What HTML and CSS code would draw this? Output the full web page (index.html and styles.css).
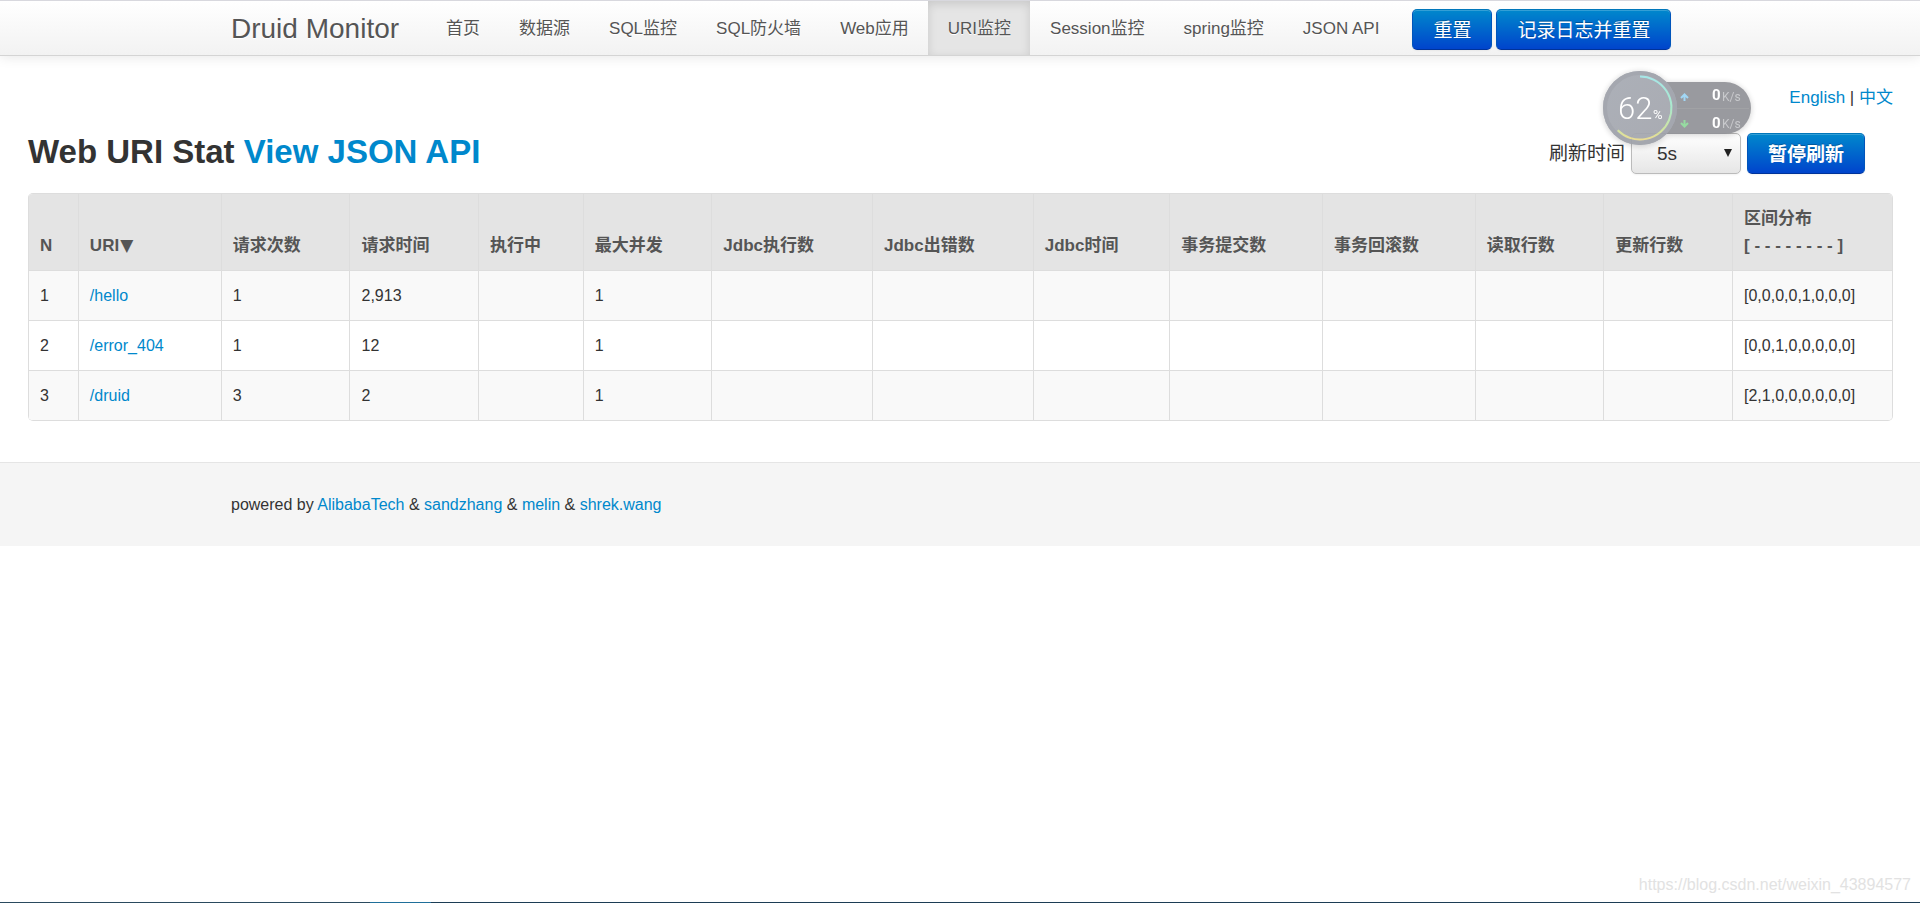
FILE: index.html
```html
<!DOCTYPE html>
<html lang="zh-CN">
    <head>
        <meta charset="utf-8">
        <title>Druid Web URI Stat</title>
        <link rel="stylesheet" href="styles.css">
    </head>
    <body>
        <header class="navbar">
            <div class="container navbar-inner">
                <a class="brand" href="#">Druid Monitor</a>
                <nav class="nav">
                    <a href="#">首页</a>
                    <a href="#">数据源</a>
                    <a href="#">SQL监控</a>
                    <a href="#">SQL防火墙</a>
                    <a href="#">Web应用</a>
                    <a class="active" href="#">URI监控</a>
                    <a href="#">Session监控</a>
                    <a href="#">spring监控</a>
                    <a href="#">JSON API</a>
                </nav>
                <div class="nav-buttons">
                    <button class="btn" type="button">重置</button>
                    <button class="btn" type="button">记录日志并重置</button>
                </div>
            </div>
        </header>

        <main class="content">
            <div class="lang">
                <a href="#">English</a> | <a href="#">中文</a>
            </div>

            <div class="title-row">
                <h3>Web URI Stat <a href="#">View JSON API</a></h3>
                <div class="refresh">
                    <label for="refreshSeconds">刷新时间</label>
                    <span class="select-wrap">
                        <select id="refreshSeconds">
                            <option>5s</option>
                            <option>10s</option>
                            <option>20s</option>
                            <option>30s</option>
                            <option>60s</option>
                        </select>
                    </span>
                    <button class="btn btn-bold" type="button">暂停刷新</button>
                </div>
            </div>

            <table class="stat-table">
                <thead>
                    <tr>
                        <th>N</th>
                        <th class="uri">URI<span class="sort">▼</span></th>
                        <th>请求次数</th>
                        <th>请求时间</th>
                        <th>执行中</th>
                        <th>最大并发</th>
                        <th>Jdbc执行数</th>
                        <th>Jdbc出错数</th>
                        <th>Jdbc时间</th>
                        <th>事务提交数</th>
                        <th>事务回滚数</th>
                        <th>读取行数</th>
                        <th>更新行数</th>
                        <th class="histogram">区间分布<br>[ - - - - - - - - ]</th>
                    </tr>
                </thead>
                <tbody>
                    <tr>
                        <td>1</td>
                        <td><a href="#">/hello</a></td>
                        <td>1</td>
                        <td>2,913</td>
                        <td></td>
                        <td>1</td>
                        <td></td>
                        <td></td>
                        <td></td>
                        <td></td>
                        <td></td>
                        <td></td>
                        <td></td>
                        <td>[0,0,0,0,1,0,0,0]</td>
                    </tr>
                    <tr>
                        <td>2</td>
                        <td><a href="#">/error_404</a></td>
                        <td>1</td>
                        <td>12</td>
                        <td></td>
                        <td>1</td>
                        <td></td>
                        <td></td>
                        <td></td>
                        <td></td>
                        <td></td>
                        <td></td>
                        <td></td>
                        <td>[0,0,1,0,0,0,0,0]</td>
                    </tr>
                    <tr>
                        <td>3</td>
                        <td><a href="#">/druid</a></td>
                        <td>3</td>
                        <td>2</td>
                        <td></td>
                        <td>1</td>
                        <td></td>
                        <td></td>
                        <td></td>
                        <td></td>
                        <td></td>
                        <td></td>
                        <td></td>
                        <td>[2,1,0,0,0,0,0,0]</td>
                    </tr>
                </tbody>
            </table>
        </main>

        <footer class="footer">
            <div class="container">
                powered by <a href="#">AlibabaTech</a> &amp; <a href="#">sandzhang</a> &amp; <a href="#">melin</a> &amp; <a href="#">shrek.wang</a>
            </div>
        </footer>

        <!-- floating network speed ball -->
        <svg class="speed-ball" width="156" height="84" viewBox="0 0 156 84">
            <defs>
                <linearGradient id="arc" x1="0" y1="0" x2="0" y2="1">
                    <stop offset="0" stop-color="#a0e6e6"/>
                    <stop offset="0.5" stop-color="#a4e8c8"/>
                    <stop offset="0.85" stop-color="#cfe39a"/>
                    <stop offset="1" stop-color="#eadb8c"/>
                </linearGradient>
                <linearGradient id="ball" x1="0" y1="0" x2="1" y2="1">
                    <stop offset="0" stop-color="#a6aab3"/>
                    <stop offset="1" stop-color="#a3a5ad"/>
                </linearGradient>
            </defs>
            <path class="pill" d="M42 15h84a26 26 0 0 1 0 52H42z"/>
            <path d="M78 41.500h72" stroke="#9a9b9f" stroke-width="1"/>
            <circle cx="41" cy="41" r="37" fill="url(#ball)"/>
            <circle cx="41" cy="41" r="35" fill="none" stroke="#9ea1a9" stroke-width="4"/>
            <path d="M41 9.500A31.500 31.500 0 1 1 18.700 63.300" fill="none" stroke="url(#arc)" stroke-width="2"/>
            <path d="M85.500 34v-6M82 31l3.500-3.500l3.500 3.500" fill="none" stroke="#9ad4f5" stroke-width="2"/>
            <path d="M85.500 53v6M82 56l3.500 3.500l3.500-3.500" fill="none" stroke="#8fd99a" stroke-width="2"/>
            <text class="percent" x="19" y="52">62</text>
            <text class="sign" x="54" y="52">%</text>
            <text class="speed" x="113" y="33">0</text>
            <text class="unit" x="123" y="34">K/s</text>
            <text class="speed" x="113" y="61">0</text>
            <text class="unit" x="123" y="61">K/s</text>
        </svg>

        <div class="watermark">https://blog.csdn.net/weixin_43894577</div>
        <div class="taskbar"></div>
    </body>
</html>
```
FILE: styles.css
```css
* {
    box-sizing: border-box;
}

body {
    position: relative;
    min-height: 100vh;
    margin: 0;
    background: #fff;
    color: #333;
    font-family: "Liberation Sans", Arial, "Noto Sans CJK SC", sans-serif;
    font-size: 16px;
    line-height: 25px;
}

a {
    color: #0088cc;
    text-decoration: none;
}

.container {
    max-width: 1458px;
    margin: 0 auto;
}

/* top bar */
.navbar {
    border-top: 1px solid #d8d8de;
    border-bottom: 1px solid #d4d4d4;
    background: linear-gradient(#ffffff, #f2f2f2);
    box-shadow: 0 1px 12px rgba(0, 0, 0, 0.1);
}

.navbar-inner {
    display: flex;
    align-items: center;
    height: 54px;
}

.brand {
    padding-right: 27px;
    color: #555;
    font-size: 28px;
    white-space: nowrap;
    text-shadow: 0 1px 0 #fff;
}

.nav {
    display: flex;
    align-self: stretch;
    font-size: 17px;
}

.nav a {
    padding: 16px 19px 14px 20px;
    color: #555;
    line-height: 24px;
    white-space: nowrap;
    text-shadow: 0 1px 0 #fff;
}

.nav .active {
    background: #e5e5e5;
    box-shadow: inset 0 3px 10px rgba(0, 0, 0, 0.125);
}

.nav-buttons {
    display: flex;
    gap: 4px;
    margin-left: 14px;
    padding-top: 2px;
}

.btn {
    height: 41px;
    padding: 0 20px 2px;
    border: 1px solid #0055cc;
    border-color: #0077bb #0055bb #003399;
    border-radius: 5px;
    background: linear-gradient(#0088cc, #0044cc);
    box-shadow: inset 0 1px 0 rgba(255, 255, 255, 0.2), 0 1px 2px rgba(0, 0, 0, 0.05);
    color: #fff;
    font-family: inherit;
    font-size: 19px;
    text-shadow: 0 -1px 0 rgba(0, 0, 0, 0.25);
    white-space: nowrap;
}

.btn-bold {
    font-weight: bold;
}

/* page */
.content {
    padding: 29px 27px 41px 28px;
}

.lang {
    font-size: 17px;
    text-align: right;
}

.title-row {
    display: flex;
    align-items: flex-start;
    justify-content: space-between;
    margin: 23px 28px 19px 0;
}

h3 {
    margin: 0;
    font-size: 33px;
    line-height: 37px;
}

.refresh {
    display: flex;
    align-items: center;
    gap: 6px;
    font-size: 19px;
}

.select-wrap {
    position: relative;
}

.select-wrap::after {
    content: "";
    position: absolute;
    top: 16px;
    right: 9px;
    border: 4px solid transparent;
    border-top: 8px solid #222;
    border-bottom: 0;
    pointer-events: none;
}

select {
    display: block;
    width: 110px;
    height: 41px;
    padding: 0 25px;
    border: 1px solid #bbb;
    border-radius: 5px;
    background: linear-gradient(#ffffff, #e6e6e6);
    box-shadow: 0 1px 2px rgba(0, 0, 0, 0.05);
    color: #333;
    font-family: inherit;
    font-size: 19px;
    appearance: none;
}

.stat-table {
    width: 100%;
    border: 1px solid #ddd;
    border-left: 0;
    border-radius: 5px;
    border-collapse: separate;
    border-spacing: 0;
    overflow: hidden;
}

.stat-table th,
.stat-table td {
    padding: 12px 11px;
    border-left: 1px solid #ddd;
    text-align: left;
    white-space: nowrap;
}

.stat-table th {
    padding: 11px;
    background: #e4e4e4;
    color: #555;
    font-size: 17px;
    line-height: 27px;
    vertical-align: bottom;
}

.stat-table .uri {
    width: 143px;
}

.stat-table .histogram {
    width: 160px;
}

.sort {
    margin-left: 1px;
    font-family: "DejaVu Sans", sans-serif;
    line-height: 1;
}

.stat-table td {
    border-top: 1px solid #ddd;
}

.stat-table tbody tr:nth-child(odd) {
    background: #f9f9f9;
}

.footer {
    padding: 29px 0;
    border-top: 1px solid #e5e5e5;
    background: #f5f5f5;
}

/* things floating over the page */
.speed-ball {
    position: absolute;
    top: 67px;
    right: 165px;
    opacity: 0.93;
    font-family: Roboto, sans-serif;
    filter: drop-shadow(0 1px 3px rgba(0, 0, 0, 0.2));
}

.pill {
    fill: #929398;
}

.percent {
    fill: #fff;
    font-size: 31px;
    font-weight: 300;
}

.sign {
    fill: #fff;
    font-size: 13px;
}

.speed {
    fill: #fff;
    font-size: 15px;
    font-weight: bold;
}

.unit {
    fill: #c4c5c9;
    font-size: 12px;
}

.watermark {
    position: absolute;
    right: 9px;
    bottom: 6px;
    color: #e2e2e2;
}

.taskbar {
    position: absolute;
    right: 0;
    bottom: 0;
    left: 0;
    height: 1px;
    background: linear-gradient(90deg, #2a4a5e 0 370px, #1f6f9a 370px 431px, #1c3d55 431px);
}
```
